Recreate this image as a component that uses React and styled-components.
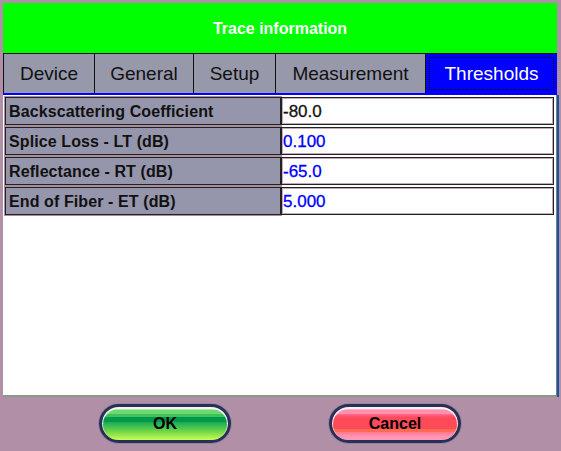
import React from 'react';
import styled, { createGlobalStyle } from 'styled-components';

const GlobalStyle = createGlobalStyle`
  html, body {
    margin: 0;
    padding: 0;
    background: #b18fa6;
  }
  * {
    box-sizing: border-box;
  }
`;

const Page = styled.div`
  width: 561px;
  height: 451px;
  background: #b18fa6;
  padding: 3px 4px 0 3px;
  display: flex;
  flex-direction: column;
  font-family: "Liberation Sans", Arial, sans-serif;
`;

const Header = styled.div`
  height: 50px;
  background: #00ff00;
  color: #fff;
  font-weight: bold;
  font-size: 16px;
  display: flex;
  align-items: center;
  justify-content: center;
  padding-top: 2px;
`;

const TabBar = styled.div`
  display: flex;
  height: 42px;
  border-top: 1px solid #111;
  border-bottom: 2px solid #0000ff;
  background: #9898ab;
`;

const Tab = styled.div`
  width: ${p => p.$w}px;
  flex: ${p => (p.$w ? 'none' : '1')};
  border-right: 1px solid #111;
  display: flex;
  align-items: center;
  justify-content: center;
  font-size: 19px;
  color: ${p => (p.$active ? '#fff' : '#111')};
  background: ${p => (p.$active ? '#0000ff' : '#9898ab')};
  outline: ${p => (p.$active ? '1px dotted #000' : 'none')};
  outline-offset: -4px;
  &:first-child {
    border-left: 1px solid #111;
  }
  &:last-child {
    border-right: none;
  }
`;

const Content = styled.div`
  flex: none;
  height: 302px;
  background: #fff;
  border-bottom: 2px solid #8a9a8a;
  border-right: 1px solid #6c8a6c;
  box-shadow: 2px 0 0 #1a4fb0;
  padding: 2px 2px 0 2px;
  display: flex;
  flex-direction: column;
  gap: 2px;
`;

const Row = styled.div`
  display: flex;
  height: 28px;
`;

const LabelCell = styled.div`
  width: 276px;
  background: #9595ab;
  border: 1px solid #222;
  box-shadow: 0 0 0 1px #a78fa0;
  display: flex;
  align-items: center;
  padding: 2px 0 0 3px;
  font-weight: bold;
  font-size: 16px;
  letter-spacing: 0.1px;
  color: #111;
`;

const ValueCell = styled.div`
  flex: 1;
  background: #fff;
  border: 1px solid #222;
  box-shadow: inset 0 0 0 1px #c7a8bb;
  display: flex;
  align-items: center;
  padding: 2px 0 0 1px;
  font-size: 17px;
  color: ${p => (p.$editable ? '#0000ff' : '#111')};
  -webkit-text-stroke: 0.3px currentColor;
`;

const Footer = styled.div`
  flex: 1;
  display: flex;
  justify-content: center;
  align-items: flex-start;
  gap: 98px;
  padding-top: 7px;
`;

const PillButton = styled.button`
  width: 132px;
  height: 39px;
  border-radius: 20px;
  border: 3px solid #2c2e58;
  box-shadow: 0 0 0 1px #8d8aa0, inset 0 1px 0 1px #f4f4f4;
  font-family: "Liberation Sans", Arial, sans-serif;
  font-weight: bold;
  font-size: 16px;
  color: #000;
  padding: 0;
  cursor: pointer;
  background: ${p =>
    p.$variant === 'ok'
      ? 'linear-gradient(to bottom, #a6ec9c 0%, #a6ec9c 10%, #6fd870 10%, #6fd870 20%, #3ec25a 20%, #3ec25a 30%, #00984c 30%, #00984c 45%, #1aa954 45%, #3cbf52 58%, #63d048 70%, #8ee24a 82%, #c4ff58 100%)'
      : 'linear-gradient(to bottom, #ffb0c8 0%, #ffb0c8 10%, #ff90b0 10%, #ff90b0 20%, #ff6f92 20%, #ff4a5a 32%, #ff4a5a 66%, #ff6a52 66%, #ff6a52 76%, #ff7a88 76%, #ff90b4 88%, #ff9cbc 100%)'};
`;

const rows = [
  { label: 'Backscattering Coefficient', value: '-80.0', editable: false },
  { label: 'Splice Loss - LT (dB)', value: '0.100', editable: true },
  { label: 'Reflectance - RT (dB)', value: '-65.0', editable: true },
  { label: 'End of Fiber - ET (dB)', value: '5.000', editable: true },
];

const tabs = [
  { name: 'Device', w: 92 },
  { name: 'General', w: 99 },
  { name: 'Setup', w: 82 },
  { name: 'Measurement', w: 150 },
  { name: 'Thresholds', active: true },
];

export default function App() {
  return (
    <>
      <GlobalStyle />
      <Page>
        <Header>Trace information</Header>
        <TabBar>
          {tabs.map(t => (
            <Tab key={t.name} $w={t.w} $active={t.active}>
              {t.name}
            </Tab>
          ))}
        </TabBar>
        <Content>
          {rows.map(r => (
            <Row key={r.label}>
              <LabelCell>{r.label}</LabelCell>
              <ValueCell $editable={r.editable}>{r.value}</ValueCell>
            </Row>
          ))}
        </Content>
        <Footer>
          <PillButton $variant="ok">OK</PillButton>
          <PillButton $variant="cancel">Cancel</PillButton>
        </Footer>
      </Page>
    </>
  );
}
